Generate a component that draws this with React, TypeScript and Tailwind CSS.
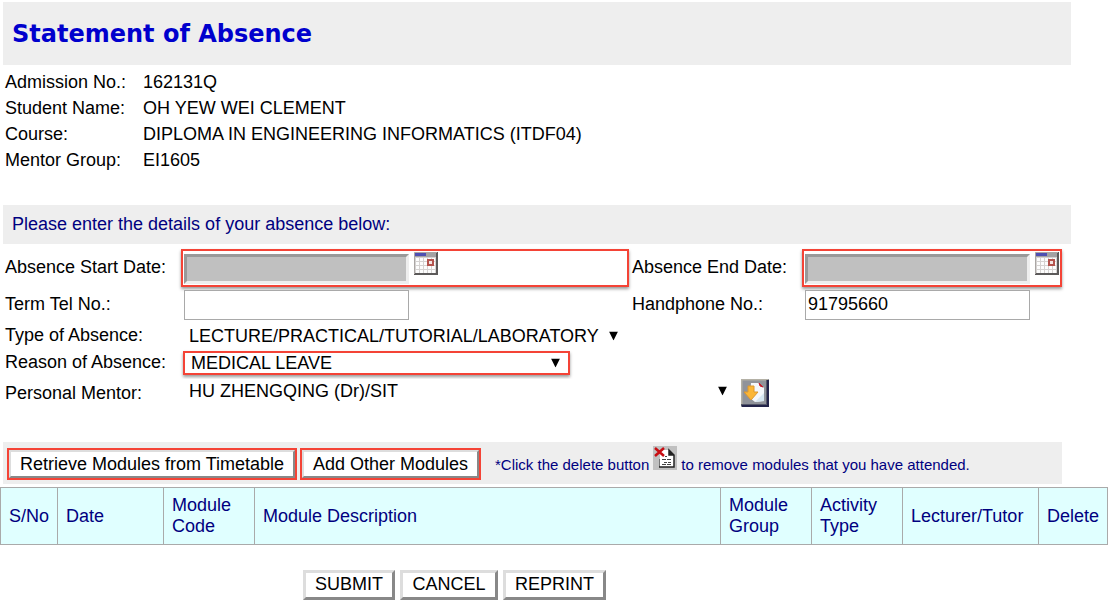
import React from "react";

const fontBase = "font-['Liberation_Sans',Arial,sans-serif]";

function CalendarIcon() {
  return (
    <svg width="24" height="23" viewBox="0 0 24 23" aria-hidden="true">
      <rect width="24" height="23" fill="#d6d3d2" />
      <rect x="1" y="1" width="22" height="4" fill="#a3a1a3" />
      <rect x="1" y="1" width="11" height="3" fill="#4f4fb2" />
      <g fill="#fdfdfd">
        {[6, 10, 14, 18].map((y) =>
          [2, 6, 10, 14, 18].map((x) => <rect key={x + "-" + y} x={x} y={y} width="3" height="3" />)
        )}
      </g>
      <rect x="14" y="8" width="5" height="5" fill="#f3e4e2" stroke="#b4534d" strokeWidth="2" />
      <path d="M0 22H23V0" fill="none" stroke="#5c5a5a" strokeWidth="2" />
      <path d="M.5 22V.5H23" fill="none" stroke="#aaa6a4" />
    </svg>
  );
}

function DownloadIcon() {
  return (
    <svg width="28" height="28" viewBox="0 0 28 28" aria-hidden="true">
      <rect width="28" height="28" fill="#90939a" />
      <path d="M0 27V0H27" fill="none" stroke="#b4b1a6" strokeWidth="3" />
      <path d="M0 26H26V1" fill="none" stroke="#55586a" strokeWidth="2" />
      <path d="M1 27H27V1" fill="none" stroke="#23244a" strokeWidth="2" />
      <path d="M10 4H18L23 9V22L14 23L9 19Z" fill="#f4f7fb" />
      <path d="M14 23L23 22V14Z" fill="#d5e6f1" />
      <path d="M18 4L22 8L19 7Z" fill="#c42532" stroke="#c42532" />
      <path d="M7 7H13V13H17L10 21L3 13H7Z" fill="#fbb637" stroke="#dd982f" />
    </svg>
  );
}

function DeleteIcon() {
  return (
    <svg width="24" height="24" viewBox="0 0 24 24" aria-hidden="true">
      <rect width="24" height="24" fill="#c0c0c0" />
      <path d="M7 4H16L21 9V21H7Z" fill="#fff" />
      <path d="M6.5 13V21" fill="none" stroke="#777" />
      <path d="M6 21H21V9L16 4V9H21" fill="none" stroke="#222" strokeWidth="1.5" />
      <path d="M16 4L21 9H16Z" fill="#222" />
      <path d="M12 10.5H14M9 13.5H13M14 13.5H18M11 16.5H14M15 16.5H18M9 18.5H13M14 18.5H18" stroke="#444" />
      <path d="M2 2L11 10M11 2L2 10" stroke="#c80d12" strokeWidth="2.5" />
    </svg>
  );
}

function Select({ id, value, className }: { id: string; value: string; className: string }) {
  return (
    <div className={"relative " + className}>
      <select id={id} defaultValue={value} className="h-full w-full appearance-none bg-white pr-6 pl-[6px] text-[18px] leading-5 outline-none">
        <option>{value}</option>
      </select>
      <svg className="pointer-events-none absolute top-1/2 right-2 -translate-y-1/2" width="9" height="9" viewBox="0 0 9 9" aria-hidden="true">
        <path d="M0 0H9L4.5 9Z" fill="#000" />
      </svg>
    </div>
  );
}

function DateField({ id, label, className }: { id: string; label: string; className: string }) {
  return (
    <div className={"flex h-[38px] border-2 border-[#f44336] pl-px shadow-[0_2px_3px_rgba(0,0,0,0.4)] " + className}>
      <input
        id={id}
        readOnly
        className="mt-[3px] h-[30px] w-[225px] border-3 border-t-[#999] border-r-[#eee] border-b-[#eee] border-l-[#999] bg-[#c0c0c0] outline-none"
      />
      <button type="button" aria-label={label} className="mt-px ml-[5px] h-[23px] w-6 shrink-0">
        <CalendarIcon />
      </button>
    </div>
  );
}

const textInput = "h-[30px] w-[225px] border border-[#a9a9a9] bg-white px-[2px] pb-[2px] outline-none";
const outset = "border-t-[#ddd] border-l-[#ddd] border-r-[#888] border-b-[#888] bg-white whitespace-nowrap";

const details = [
  ["Admission No.:", "162131Q"],
  ["Student Name:", "OH YEW WEI CLEMENT"],
  ["Course:", "DIPLOMA IN ENGINEERING INFORMATICS (ITDF04)"],
  ["Mentor Group:", "EI1605"],
];

const columns = [
  { name: "S/No", width: "w-[57px]" },
  { name: "Date", width: "w-[106px]" },
  { name: "Module Code", width: "w-[91px]" },
  { name: "Module Description", width: "" },
  { name: "Module Group", width: "w-[91px]" },
  { name: "Activity Type", width: "w-[91px]" },
  { name: "Lecturer/Tutor", width: "w-[136px]" },
  { name: "Delete", width: "w-[69px]" },
];

export default function App() {
  return (
    <main className={"bg-white pt-[2px] text-[18px] leading-[21px] text-black " + fontBase}>
      <header className="mr-11 ml-[3px] flex h-[63px] items-center bg-[#eee] pl-[9px]">
        <h1 className="font-['DejaVu_Sans',Verdana,sans-serif] text-[24px] leading-8 font-bold text-[#0000cd]">Statement of Absence</h1>
      </header>

      <dl className="grid grid-cols-[138px_1fr] pt-1 pl-[5px] leading-[26px]">
        {details.map(([k, v]) => (
          <React.Fragment key={k}>
            <dt>{k}</dt>
            <dd>{v}</dd>
          </React.Fragment>
        ))}
      </dl>

      <form onSubmit={(e) => e.preventDefault()}>
        <h2 className="mt-8 mr-11 ml-[3px] flex h-[39px] items-center bg-[#eee] pl-[9px] text-[#000080]">
          Please enter the details of your absence below:
        </h2>

        <div className="mt-[5px] mr-[53px] ml-[5px] grid grid-cols-[176px_1fr_170px_260px] items-center gap-y-[3px]">
          <label htmlFor="start" className="pb-[2px]">Absence Start Date:</label>
          <DateField id="start" label="Choose start date" className="mr-[3px]" />
          <label htmlFor="end" className="pb-[2px]">Absence End Date:</label>
          <DateField id="end" label="Choose end date" className="" />

          <label htmlFor="tel" className="pb-[2px]">Term Tel No.:</label>
          <div className="flex pl-[3px]">
            <input id="tel" className={textInput} />
          </div>
          <label htmlFor="phone" className="pb-[2px]">Handphone No.:</label>
          <div className="flex pl-[3px]">
            <input id="phone" defaultValue="91795660" className={textInput} />
          </div>

          <label htmlFor="type">Type of Absence:</label>
          <div className="col-span-3 pl-[2px]">
            <Select id="type" value="LECTURE/PRACTICAL/TUTORIAL/LABORATORY" className="h-[25px] w-[443px]" />
          </div>

          <label htmlFor="reason" className="pb-[2px]">Reason of Absence:</label>
          <div className="col-span-3 pl-[2px]">
            <Select id="reason" value="MEDICAL LEAVE" className="h-6 w-[387px] border-2 border-[#f44336] shadow-[0_2px_3px_rgba(0,0,0,0.4)]" />
          </div>

          <label htmlFor="mentor" className="pt-px">Personal Mentor:</label>
          <div className="col-span-3 flex items-start pt-px pl-[2px]">
            <Select id="mentor" value="HU ZHENGQING (Dr)/SIT" className="h-6 w-[552px]" />
            <button type="button" aria-label="Load mentor" className="ml-[6px] h-7 w-7">
              <DownloadIcon />
            </button>
          </div>
        </div>

        <div className="mt-[35px] mr-[53px] ml-[3px] flex h-[42px] items-end gap-[3px] bg-[#eee] pb-1 pl-1 text-[#000080]">
          <span className="flex h-8 border-2 border-[#f44336]">
            <button type="button" className={"w-[286px] border-2 text-black " + outset}>Retrieve Modules from Timetable</button>
          </span>
          <span className="flex h-8 border-2 border-[#f44336]">
            <button type="button" className={"w-[177px] border-2 text-black " + outset}>Add Other Modules</button>
          </span>
          <p className="flex h-[34px] items-start gap-1 pl-[11px] text-[15px] leading-[38px] whitespace-nowrap">
            <span>*Click the delete button</span>
            <DeleteIcon />
            <span>to remove modules that you have attended.</span>
          </p>
        </div>

        <div className="mt-[3px] pr-[7px]">
          <table className="w-full table-fixed border-collapse bg-[#e0ffff] text-left text-[#000080]">
            <thead>
              <tr className="h-[57px]">
                {columns.map((c) => (
                  <th key={c.name} scope="col" className={"border border-[#aaa] pr-1 pl-2 align-middle font-normal " + c.width}>
                    {c.name}
                  </th>
                ))}
              </tr>
            </thead>
          </table>
        </div>

        <div className="mt-[25px] flex gap-[5px] pl-[303px]">
          <button type="submit" className={"h-[30px] w-[92px] border-3 pb-[2px] " + outset}>SUBMIT</button>
          <button type="button" className={"h-[30px] w-[98px] border-3 pb-[2px] " + outset}>CANCEL</button>
          <button type="button" className={"h-[30px] w-[103px] border-3 pb-[2px] " + outset}>REPRINT</button>
        </div>
      </form>
    </main>
  );
}
